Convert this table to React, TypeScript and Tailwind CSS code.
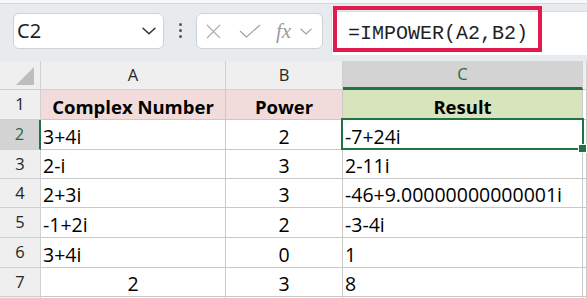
import React from "react";

const ROWS: Array<{ h: number; a: string; aCenter?: boolean; b: string; c: string }> = [
  { h: 30, a: "3+4i", b: "2", c: "-7+24i" },
  { h: 29, a: "2-i", b: "3", c: "2-11i" },
  { h: 29, a: "2+3i", b: "3", c: "-46+9.00000000000001i" },
  { h: 30, a: "-1+2i", b: "2", c: "-3-4i" },
  { h: 30, a: "3+4i", b: "0", c: "1" },
  { h: 29, a: "2", aCenter: true, b: "3", c: "8" },
];

const cell = "border-r border-b border-[#c9c9c9] flex items-end pb-[1px] leading-[22px] overflow-hidden whitespace-nowrap";
const hdr = "border-r border-b border-[#d0d0d0] bg-[#efefef] flex items-center justify-center text-[16.5px] leading-none text-[#262626]";

function Chevron({ className }: { className?: string }) {
  return (
    <svg viewBox="0 0 14 8" className={className} fill="none" stroke="currentColor" strokeWidth="1.5" strokeLinecap="round" strokeLinejoin="round">
      <path d="M1 1.2 7 6.8 13 1.2" />
    </svg>
  );
}

export default function App() {
  return (
    <div className="relative w-[587px] h-[298px] overflow-hidden bg-[#e8ebee] font-['Open_Sans',sans-serif]">
      <div className="h-[4px] bg-[#f6f7f8] border-b border-[#d7dadd]" />

      {/* formula toolbar */}
      <div className="h-[57px] flex items-start pt-[8px]">
        <div className="ml-[13px] mt-[1px] w-[151px] h-[36px] bg-white border border-[#cfd2d5] rounded-[6px] flex items-center pl-[3px] pr-[7px]">
          <span className="flex-1 text-[20px] text-[#1f1f1f] font-['Noto_Sans',sans-serif] leading-none">C2</span>
          <Chevron className="w-[14px] h-[8px] text-[#333]" />
        </div>
        <div className="w-[32px] h-[37px] flex flex-col items-center justify-center gap-[3px]">
          <span className="w-[3px] h-[3px] rounded-full bg-[#555]" />
          <span className="w-[3px] h-[3px] rounded-full bg-[#555]" />
          <span className="w-[3px] h-[3px] rounded-full bg-[#555]" />
        </div>
        <div className="mt-[1px] w-[127px] h-[36px] bg-white border border-[#cfd2d5] rounded-[6px] flex items-center pl-[9px] text-[#a3a3a3]">
          <svg viewBox="0 0 16 16" className="w-[15px] h-[15px]" fill="none" stroke="currentColor" strokeWidth="1.2">
            <path d="M1 1 15 15M15 1 1 15" />
          </svg>
          <svg viewBox="0 0 22 14" className="ml-[18px] w-[22px] h-[14px]" fill="none" stroke="currentColor" strokeWidth="1.2">
            <path d="M1 7 7.5 13 21 1" />
          </svg>
          <span className="ml-[15px] font-['Liberation_Serif',serif] italic text-[21px] leading-none text-[#9c9c9c]">fx</span>
          <Chevron className="ml-[9px] w-[12px] h-[7px] text-[#9c9c9c]" />
        </div>
        <div className="ml-[8px] mt-[-1px] flex-1 h-[44px] bg-white border-t border-l border-[#d9dcdf] flex items-center pl-[16px]">
          <span className="font-['Liberation_Mono',monospace] text-[20px] text-[#1f1f1f] leading-none">=IMPOWER(A2,B2)</span>
        </div>
      </div>

      {/* grid */}
      <div className="grid grid-cols-[41px_185px_117px_240px_1fr] bg-white">
        <div className="h-[29px] border-r border-b border-[#d0d0d0] bg-[#efefef] relative">
          <svg viewBox="0 0 18 18" className="absolute left-[16px] top-[6px] w-[18px] h-[18px]">
            <path d="M18 0 18 18 0 18Z" fill="#bdbdbd" />
          </svg>
        </div>
        <div className={`h-[29px] ${hdr}`}>A</div>
        <div className={`h-[29px] ${hdr}`}>B</div>
        <div className="h-[29px] bg-[#d3d3d3] border-b-[3px] border-[#217346] border-r border-r-[#d0d0d0] flex items-center justify-center text-[16.5px] leading-none text-[#1e6b41]">C</div>
        <div className={`h-[29px] ${hdr}`} />

        {/* row 1 */}
        <div className={`h-[30px] ${hdr}`}>1</div>
        <div className={`${cell} justify-center bg-[#f2dcdb] font-bold text-[18.5px] text-black`}>Complex Number</div>
        <div className={`${cell} justify-center bg-[#f2dcdb] font-bold text-[18.5px] text-black`}>Power</div>
        <div className={`${cell} justify-center bg-[#d8e4bc] font-bold text-[18.5px] text-black`}>Result</div>
        <div className={cell} />

        {ROWS.map((r, i) => {
          const sel = i === 0;
          return (
            <React.Fragment key={i}>
              <div
                style={{ height: r.h }}
                className={
                  sel
                    ? "border-b border-[#d0d0d0] border-r-2 border-r-[#217346] bg-[#d3d3d3] flex items-center justify-center text-[16.5px] leading-none text-[#1e6b41]"
                    : hdr
                }
              >
                {i + 2}
              </div>
              <div className={`${cell} ${r.aCenter ? "justify-center" : "pl-[2px]"} text-[19.5px] text-black`}>{r.a}</div>
              <div className={`${cell} justify-center text-[19.5px] text-black`}>{r.b}</div>
              <div className={`${cell} pl-[2px] text-[19.5px] text-black`}>{r.c}</div>
              <div className={cell} />
            </React.Fragment>
          );
        })}
        <div className={`h-[30px] ${hdr}`} />
        <div className={cell} />
        <div className={cell} />
        <div className={cell} />
        <div className={cell} />
      </div>

      {/* active cell selection */}
      <div className="absolute left-[341px] top-[118px] w-[243px] h-[32px] border-2 border-[#217346]" />
      <div className="absolute left-[578px] top-[144px] w-[9px] h-[9px] bg-[#217346] border border-white" />

      {/* highlight around the formula */}
      <div className="absolute left-[333px] top-[6px] w-[209px] h-[46px] border-[4px] border-[#e11b4c]" />
    </div>
  );
}
